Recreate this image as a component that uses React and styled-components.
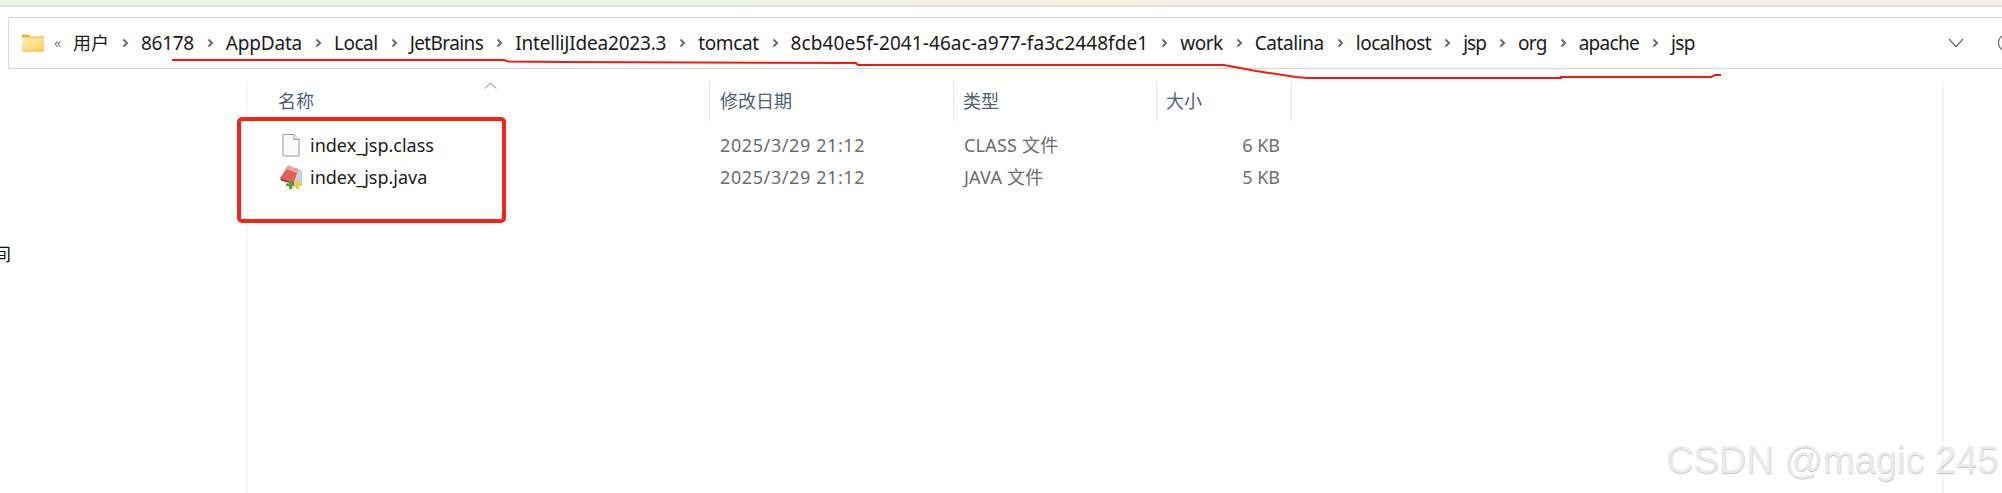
import React from "react";
import styled, { createGlobalStyle } from "styled-components";

const crumbs = [
  { label: "86178", tight: -0.3 },
  { label: "AppData", tight: -0.2 },
  { label: "Local", tight: -0.5 },
  { label: "JetBrains", tight: -0.6 },
  { label: "IntelliJIdea2023.3", tight: -0.2 },
  { label: "tomcat", tight: -0.4 },
  { label: "8cb40e5f-2041-46ac-a977-fa3c2448fde1", tight: 0.08 },
  { label: "work", tight: -0.5 },
  { label: "Catalina", tight: -0.4 },
  { label: "localhost", tight: -0.55 },
  { label: "jsp", tight: -1 },
  { label: "org", tight: -0.7 },
  { label: "apache", tight: -0.7 },
  { label: "jsp", tight: -0.6 },
];

const files = [
  { name: "index_jsp.class", date: "2025/3/29 21:12", type: "CLASS 文件", size: "6 KB", icon: "blank" },
  { name: "index_jsp.java", date: "2025/3/29 21:12", type: "JAVA 文件", size: "5 KB", icon: "java" },
];

const Global = createGlobalStyle`
  html, body {
    margin: 0;
    padding: 0;
    background: #fff;
    overflow: hidden;
  }
`;

const Page = styled.div`
  position: relative;
  width: 2002px;
  height: 493px;
  overflow: hidden;
  background: #fff;
  font-family: "Noto Sans", "Noto Sans CJK SC", sans-serif;
`;

const TopBand = styled.div`
  height: 5px;
  background: linear-gradient(90deg, #ebf6e1 0%, #ebf6e1 35%, #f7f1e2 48%, #f8efeb 65%, #f9f0ee 100%);
  border-bottom: 2px solid #e3e5dc;
`;

const AddressBar = styled.div`
  display: flex;
  align-items: center;
  box-sizing: border-box;
  width: 2020px;
  height: 52px;
  margin: 10px 0 0 8px;
  padding-left: 13px;
  border: 1px solid #d9d9d9;
  background: #fff;
`;

const FolderIcon = styled.svg`
  width: 22px;
  height: 18px;
  flex: none;
`;

const Overflow = styled.span`
  width: 8px;
  margin: 0 11px 0 10px;
  font-size: 14px;
  line-height: 1;
  color: #808080;
`;

const Crumb = styled.span`
  flex: none;
  font-size: ${(props) => props.$size || 19}px;
  line-height: 26px;
  letter-spacing: ${(props) => props.$tight || 0}px;
  color: #1a1a1a;
`;

const CrumbSep = styled.svg`
  flex: none;
  width: 8px;
  height: 12px;
  margin: 0 12px;
`;

const Spacer = styled.div`
  flex: 1;
`;

const DropChevron = styled.svg`
  flex: none;
  width: 16px;
  height: 10px;
  margin-right: 33px;
`;

const RefreshIcon = styled.svg`
  flex: none;
  width: 20px;
  height: 20px;
  margin-right: 10px;
`;

const Body = styled.div`
  display: flex;
  height: 413px;
  margin-top: 12px;
`;

const Sidebar = styled.aside`
  box-sizing: border-box;
  flex: none;
  width: 248px;
  padding-top: 161px;
  overflow: hidden;
  border-right: 2px solid #f6f6f6;
`;

const SidebarText = styled.div`
  margin-left: -7px;
  font-size: 18px;
  line-height: 24px;
  color: #111;
`;

const Content = styled.main`
  position: relative;
  box-sizing: border-box;
  width: 1696px;
  border-right: 2px solid #f5f5f5;
`;

const Columns = styled.div`
  display: grid;
  grid-template-columns: 462px 244px 203px 135px;
`;

const Head = styled.div`
  box-sizing: border-box;
  height: 40px;
  padding-left: ${(props) => props.$pad}px;
  border-right: 1px solid #e6e6e6;
  font-size: 18px;
  line-height: 40px;
  color: #4c607a;
`;

const SortMark = styled.svg`
  position: absolute;
  left: 236px;
  top: 1px;
  width: 13px;
  height: 7px;
`;

const Rows = styled.div`
  display: flex;
  flex-direction: column;
  padding-top: 8px;
`;

const Name = styled.div`
  display: flex;
  align-items: center;
  gap: 8px;
  height: 32px;
  padding-left: 32px;
  font-size: 18px;
  color: #1a1a1a;
`;

const Cell = styled.div`
  box-sizing: border-box;
  height: 32px;
  padding: ${(props) => (props.$right ? "0 12px 0 0" : "0 0 0 10px")};
  text-align: ${(props) => (props.$right ? "right" : "left")};
  font-size: 18px;
  line-height: 32px;
  letter-spacing: ${(props) => props.$track || 0}px;
  color: #6d6d6d;
`;

const FileIcon = styled.svg`
  flex: none;
  width: 22px;
  height: 24px;
`;

const Scribble = styled.svg`
  position: absolute;
  left: 0;
  top: 0;
  width: 2002px;
  height: 100px;
  pointer-events: none;
`;

const RedBox = styled.div`
  position: absolute;
  left: 237px;
  top: 117px;
  box-sizing: border-box;
  width: 269px;
  height: 106px;
  border: 4px solid #fb2117;
  border-radius: 5px;
`;

const Watermark = styled.div`
  position: absolute;
  left: 1666px;
  top: 438px;
  font-family: "Liberation Sans", Arial, sans-serif;
  font-size: 38px;
  line-height: 44px;
  white-space: nowrap;
  color: rgba(240, 240, 240, 0.9);
  text-shadow: 0.5px 0.5px 1px rgba(175, 175, 175, 0.7);
`;

const Chevron = () => (
  <CrumbSep viewBox="0 0 8 12">
    <path d="M2.5 2.5 L6 6 L2.5 9.5" fill="none" stroke="#6a6a6a" strokeWidth="2" />
  </CrumbSep>
);

const BlankFile = () => (
  <FileIcon viewBox="0 0 22 24">
    <path d="M3 1.5 H14 L19 6.5 V23 H3 Z" fill="#fbfbfb" stroke="#9a9a9a" strokeWidth="1" />
    <path d="M14 1.5 V6.5 H19" fill="#f0f0f0" stroke="#9a9a9a" strokeWidth="1" />
  </FileIcon>
);

const JavaFile = () => (
  <FileIcon viewBox="0 0 22 24">
    <path d="M16 3 L22 6 L21.5 20 L11 23 Z" fill="#c6d5e3" stroke="#a7b3bd" strokeWidth="0.6" />
    <path d="M8.5 0.5 L18 4.5 L14 17.5 L0 13 Z" fill="#e2605a" />
    <path d="M8.5 0.5 L18 4.5 L16.8 8 L5 3.8 Z" fill="#f0a39c" />
    <path d="M0 13 L14 17.5 L14.5 19.5 L1 15.5 Z" fill="#b5302c" />
    <path d="M6 18.5 H9 V15.5 H12 V18.5 H14 V21 H12 V24 H9 V21 H6 Z" fill="#45a838" />
    <path d="M14 18.5 H16 V15.5 H19 V18.5 H22 V21 H19 V24 H16 V21 H14 Z" fill="#f0cb3c" />
  </FileIcon>
);

const App = () => {
  return (
    <Page>
      <Global />
      <TopBand />
      <AddressBar>
        <FolderIcon viewBox="0 0 22 18">
          <path d="M0 1.5 Q0 0.5 1 0.5 H7 L9 3 H0 Z" fill="#f0b429" />
          <rect x="0" y="2.5" width="22" height="15" rx="0.5" fill="#e9b23c" />
          <rect x="0" y="3.5" width="22" height="13" fill="url(#folderFill)" />
          <defs>
            <linearGradient id="folderFill" x1="0" y1="0" x2="1" y2="1">
              <stop offset="0" stopColor="#fff0b8" />
              <stop offset="1" stopColor="#fdcf5e" />
            </linearGradient>
          </defs>
        </FolderIcon>
        <Overflow>«</Overflow>
        <Crumb $size={18}>用户</Crumb>
        {crumbs.map((crumb, index) => (
          <React.Fragment key={index}>
            <Chevron />
            <Crumb $tight={crumb.tight}>{crumb.label}</Crumb>
          </React.Fragment>
        ))}
        <Spacer />
        <DropChevron viewBox="0 0 16 10">
          <path d="M1 1 L8 8.5 L15 1" fill="none" stroke="#6b6b6b" strokeWidth="1.2" />
        </DropChevron>
        <RefreshIcon viewBox="0 0 20 20">
          <path d="M17 5 A8.5 8.5 0 1 0 18.5 10" fill="none" stroke="#6b6b6b" strokeWidth="1.2" />
        </RefreshIcon>
      </AddressBar>
      <Body>
        <Sidebar>
          <SidebarText>间</SidebarText>
        </Sidebar>
        <Content>
          <Columns>
            <Head $pad={30}>名称</Head>
            <Head $pad={10}>修改日期</Head>
            <Head $pad={9}>类型</Head>
            <Head $pad={9}>大小</Head>
          </Columns>
          <SortMark viewBox="0 0 13 7">
            <path d="M1 6.5 L6.5 1 L12 6.5" fill="none" stroke="#7a7a7a" strokeWidth="1" />
          </SortMark>
          <Rows>
            {files.map((file) => (
              <Columns key={file.name}>
                <Name>
                  {file.icon === "java" ? <JavaFile /> : <BlankFile />}
                  {file.name}
                </Name>
                <Cell $track={0.6}>{file.date}</Cell>
                <Cell $track={0.2}>{file.type}</Cell>
                <Cell $right>{file.size}</Cell>
              </Columns>
            ))}
          </Rows>
        </Content>
      </Body>
      <Scribble viewBox="0 0 2002 100">
        <polyline
          points="172,60 504,60 508,61.5 563,62 856,63 858,65 1224,65 1256,71 1296,77 1307,78 1561,78 1561,77 1711,77 1715,75 1721,75"
          fill="none"
          stroke="#f5180f"
          strokeWidth="2"
        />
      </Scribble>
      <RedBox />
      <Watermark>CSDN @magic 245</Watermark>
    </Page>
  );
};

export default App;
